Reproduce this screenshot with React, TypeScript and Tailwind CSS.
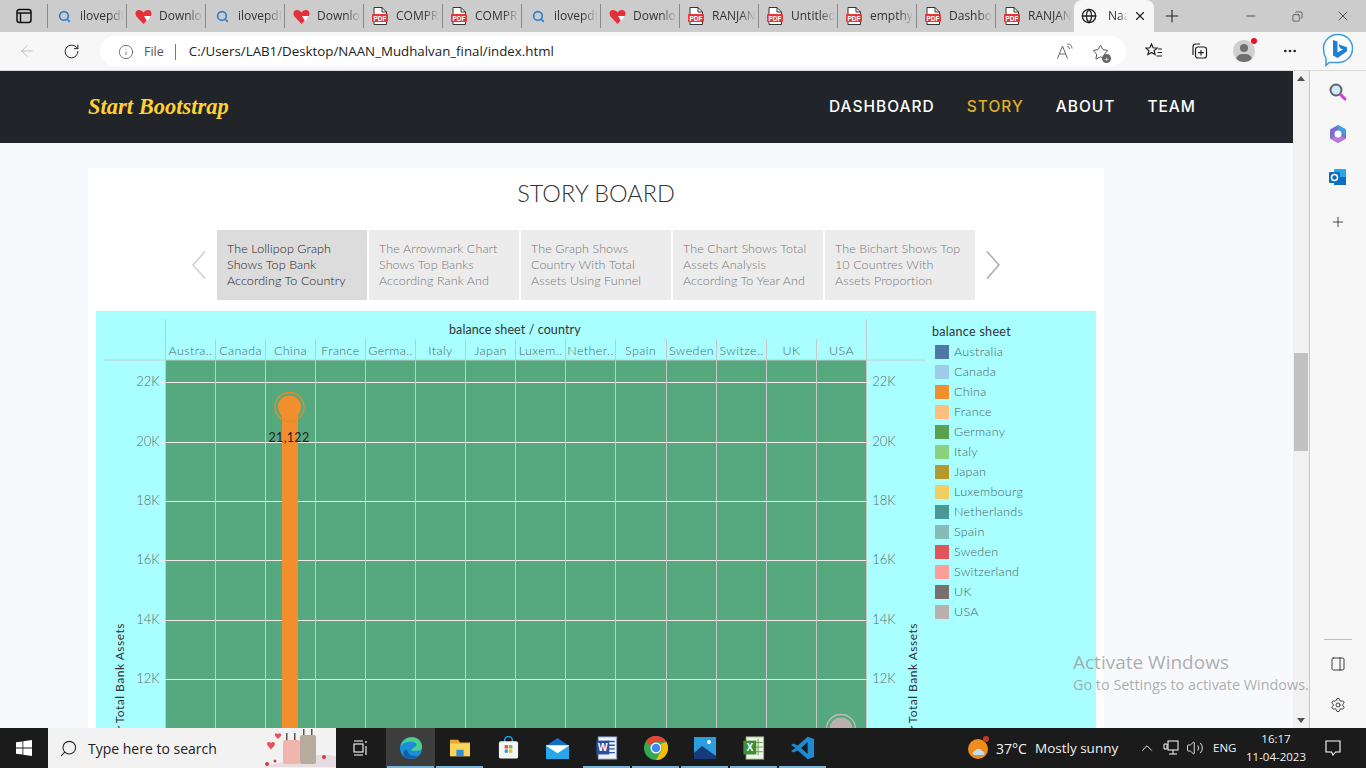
import React from 'react';
import {
  ArrowLeft,
  ChevronUp,
  Copy,
  Globe,
  Info,
  Minus,
  MoreHorizontal,
  PanelRight,
  Plus,
  RotateCw,
  Search,
  Settings,
  Star,
  Volume2,
  X,
} from 'lucide-react';

type TabKind = 'search' | 'heart' | 'pdf';

const tabs: { title: string; kind: TabKind }[] = [
  { title: 'ilovepdf', kind: 'search' },
  { title: 'Downlo', kind: 'heart' },
  { title: 'ilovepdf', kind: 'search' },
  { title: 'Downlo', kind: 'heart' },
  { title: 'COMPR', kind: 'pdf' },
  { title: 'COMPR', kind: 'pdf' },
  { title: 'ilovepdf', kind: 'search' },
  { title: 'Downlo', kind: 'heart' },
  { title: 'RANJAN', kind: 'pdf' },
  { title: 'Untitled', kind: 'pdf' },
  { title: 'empthy', kind: 'pdf' },
  { title: 'Dashbo', kind: 'pdf' },
  { title: 'RANJAN', kind: 'pdf' },
];

const storyPoints = [
  ['The Lollipop Graph', 'Shows Top Bank', 'According To Country'],
  ['The Arrowmark Chart', 'Shows Top Banks', 'According Rank And'],
  ['The Graph Shows', 'Country With Total', 'Assets Using Funnel'],
  ['The Chart Shows Total', 'Assets Analysis', 'According To Year And'],
  ['The Bichart Shows Top', '10 Countres With', 'Assets Proportion'],
];

const countries = ['Austra..', 'Canada', 'China', 'France', 'Germa..', 'Italy', 'Japan', 'Luxem..', 'Nether..', 'Spain', 'Sweden', 'Switze..', 'UK', 'USA'];

const legend = [
  ['Australia', 'bg-[#4e79a7]'],
  ['Canada', 'bg-[#a0cbe8]'],
  ['China', 'bg-[#f28e2b]'],
  ['France', 'bg-[#ffbe7d]'],
  ['Germany', 'bg-[#59a14f]'],
  ['Italy', 'bg-[#8cd17d]'],
  ['Japan', 'bg-[#b6992d]'],
  ['Luxembourg', 'bg-[#f1ce63]'],
  ['Netherlands', 'bg-[#499894]'],
  ['Spain', 'bg-[#86bcb6]'],
  ['Sweden', 'bg-[#e15759]'],
  ['Switzerland', 'bg-[#ff9d9a]'],
  ['UK', 'bg-[#79706e]'],
  ['USA', 'bg-[#bab0ac]'],
];

const ticks = [
  ['22K', 71.5],
  ['20K', 131.5],
  ['18K', 190.5],
  ['16K', 249.5],
  ['14K', 309.5],
  ['12K', 368.5],
] as const;

const PdfIcon = () => (
  <svg width="16" height="18" viewBox="0 0 16 18">
    <path d="M2 .5h8l4.500 4.500v12.500h-12.500z" fill="#fff" stroke="#333" strokeWidth="1" />
    <path d="M10 .5v4.500h4.500" fill="none" stroke="#333" strokeWidth="1" />
    <rect x="0" y="7" width="16" height="8" rx="1" fill="#e9343a" />
    <text x="8" y="13.500" textAnchor="middle" fontSize="6.500" fontWeight="700" fill="#fff" fontFamily="Liberation Sans">PDF</text>
  </svg>
);

const HeartIcon = () => (
  <svg width="17" height="17" viewBox="0 0 17 17">
    <path d="M8.500 16 1.500 8.500C-.5 6 .5 2 4 2c2 0 3.500 1 4.500 2.500C9.500 3 11 2 13 2c3.500 0 4.500 4 2.500 6.500z" fill="#e5303a" />
    <path d="M9 8h7l-4 5z" fill="#fff" />
  </svg>
);

const TabIcon = ({ kind }: { kind: TabKind }) => {
  if (kind === 'pdf') return <PdfIcon />;
  if (kind === 'heart') return <HeartIcon />;
  return <Search size={13} strokeWidth={3} className="text-[#2f7fd1] ml-[1px]" />;
};

const TabStrip = () => (
  <div className="flex h-8 bg-[#cccccc] shrink-0">
    <div className="w-[47px] flex items-center justify-center">
      <svg width="16" height="16" viewBox="0 0 16 16" fill="none" stroke="#111" strokeWidth="1.500">
        <rect x="1" y="1.500" width="14" height="13" rx="2.500" />
        <path d="M1 5h14M4.500 5v9" />
      </svg>
    </div>
    {tabs.map((tab, i) => (
      <div key={i} className="w-[79px] h-full flex items-center">
        <div className="h-[24px] w-full border-l border-[#8a8a8a] flex items-center pl-[7px] overflow-hidden">
          <div className="w-[18px] shrink-0 flex justify-center"><TabIcon kind={tab.kind} /></div>
          <span className="ml-[7px] text-[12px] text-[#333] whitespace-nowrap w-[44px] [mask-image:linear-gradient(to_right,black_65%,transparent)]">
            {tab.title}
          </span>
        </div>
      </div>
    ))}
    <div className="w-[80px] bg-[#f7f7f7] rounded-t-lg flex items-center pl-[7px]">
      <Globe size={16} className="text-[#222]" />
      <span className="ml-[11px] text-[12px] text-[#333] w-[20px] whitespace-nowrap [mask-image:linear-gradient(to_right,black_55%,transparent)]">Naa</span>
      <X size={14} className="ml-[5px] text-[#222]" />
    </div>
    <div className="w-[36px] flex items-center justify-center">
      <Plus size={20} strokeWidth={1.300} className="text-[#222]" />
    </div>
    <div className="flex-1 flex items-center justify-end text-[#222]">
      <div className="w-[46px] flex justify-center"><Minus size={14} strokeWidth={1.200} /></div>
      <div className="w-[46px] flex justify-center"><Copy size={11} strokeWidth={1.300} className="-scale-x-100" /></div>
      <div className="w-[46px] flex justify-center"><X size={16} strokeWidth={1.100} /></div>
    </div>
  </div>
);

const BingIcon = () => (
  <svg width="32" height="34" viewBox="0 0 32 34">
    <path d="M16 1.500c8 0 14.500 6 14.500 14s-6.500 14-14.500 14H7l-3 3v-7C2 22 1.500 19 1.500 15.500c0-8 6.500-14 14.500-14z" fill="#fff" stroke="#3f9be0" strokeWidth="1.500" />
    <path d="M11 7l4.500 1.500v11l5.500-3-3-1.300-1.500-4 8.500 3v4L15.500 25 11 22.500z" fill="#1d7fd8" />
  </svg>
);

const Toolbar = () => (
  <div className="flex items-center h-[39px] bg-[#f7f7f7] shrink-0 border-b border-[#d9d9d9]">
    <div className="w-[54px] flex justify-center"><ArrowLeft size={18} strokeWidth={1.200} className="text-[#b5b5b5]" /></div>
    <div className="w-[34px] flex justify-center"><RotateCw size={17} strokeWidth={1.400} className="text-[#222]" /></div>
    <div className="ml-[12px] w-[1026px] h-[30px] bg-white rounded-full flex items-center pl-[18px] pr-[14px] pt-[2px]">
      <Info size={16} strokeWidth={1.200} className="text-[#555]" />
      <span className="ml-[10px] text-[12.500px] text-[#555]">File</span>
      <span className="ml-[11px] h-[16px] border-l border-[#777]" />
      <span className="ml-[13px] text-[13.300px] text-[#222]">C:/Users/LAB1/Desktop/NAAN_Mudhalvan_final/index.html</span>
      <svg className="ml-auto mr-[18px]" width="18" height="18" viewBox="0 0 18 18" fill="none" stroke="#666" strokeWidth="1">
        <path d="M1.500 15.500 6.500 3l5 12.500M3.300 11h6.400" />
        <path d="M11 3.500c1.500 0 2.500 1 2.500 2.500M11.500 1c3 0 4.500 2 4.500 4.500" />
      </svg>
      <span className="relative mr-[3px]">
        <Star size={17} strokeWidth={1.200} className="text-[#333]" />
        <span className="absolute -right-[2px] -bottom-[2px] w-[9px] h-[9px] rounded-full bg-[#666] text-white text-[8px] leading-[9px] text-center">+</span>
      </span>
    </div>
    <div className="w-[46px] ml-[5px] flex justify-center">
      <svg width="18" height="18" viewBox="0 0 18 18" fill="none" stroke="#222" strokeWidth="1.200">
        <path d="M6.500 2l1.600 3.800 4 .3-3 2.600 1 3.900-3.600-2.100-3.600 2.100 1-3.900-3-2.600 4-.3z" />
        <path d="M13 7h4M12.500 10.500H17M11.500 14H17" />
      </svg>
    </div>
    <div className="w-[44px] flex justify-center">
      <svg width="18" height="18" viewBox="0 0 18 18" fill="none" stroke="#222" strokeWidth="1.200">
        <path d="M3 13V5c0-2 1-3 3-3h4" />
        <rect x="5.500" y="5" width="11" height="11" rx="2.500" fill="#f7f7f7" />
        <path d="M11 8v5.500M8.200 10.700h5.600" />
      </svg>
    </div>
    <div className="w-[46px] flex justify-center relative">
      <div className="w-[22px] h-[22px] rounded-full bg-[#cfcfcf] relative overflow-hidden">
        <div className="absolute left-[7px] top-[4px] w-[8px] h-[8px] rounded-full bg-[#6f6f6f]" />
        <div className="absolute left-[3px] top-[14px] w-[16px] h-[12px] rounded-full bg-[#6f6f6f]" />
      </div>
      <span className="absolute left-[30px] -top-[2px] w-[6px] h-[6px] rounded-full bg-[#e81123]" />
    </div>
    <div className="w-[46px] flex justify-center"><MoreHorizontal size={16} className="text-[#222]" /></div>
    <div className="ml-[9px] -mt-[3px]"><BingIcon /></div>
  </div>
);

const Navbar = () => (
  <nav className="h-[72px] bg-[#212529] flex items-center justify-between pl-[88px] pr-[97px] shrink-0">
    <a className="text-[#fed136] text-[22.500px] italic font-bold [font-family:'Liberation_Serif',serif]">Start Bootstrap</a>
    <div className="flex gap-[32px] text-[15.500px] font-medium text-white tracking-[1px] [font-family:Inter,sans-serif]">
      <span>DASHBOARD</span>
      <span className="text-[#dfae2c]">STORY</span>
      <span>ABOUT</span>
      <span>TEAM</span>
    </div>
  </nav>
);

const StoryArrow = ({ d, color }: { d: string; color: string }) => (
  <svg width="16" height="30" viewBox="0 0 16 30" fill="none" stroke={color} strokeWidth="1.500">
    <path d={d} />
  </svg>
);

const StoryTabs = () => (
  <div className="flex items-center justify-center h-[70px] mt-[21px]">
    <StoryArrow d="M14 1.500 2 15l12 13.500" color="#cfcfcf" />
    <div className="flex gap-[2px] mx-[10px]">
      {storyPoints.map((lines, i) => (
        <div
          key={i}
          className={`w-[150px] h-[70px] pl-[10px] flex flex-col justify-center text-[12.500px] leading-[16px] font-light tracking-[0.1px] whitespace-nowrap ${
            i === 0 ? 'bg-[#dcdcdc] text-[#222]' : 'bg-[#ececec] text-[#777]'
          }`}
        >
          {lines.map((line) => (
            <div key={line}>{line}</div>
          ))}
        </div>
      ))}
    </div>
    <StoryArrow d="M2 1.500 14 15 2 28.500" color="#aaaaaa" />
  </div>
);

// plot runs from x=69 to x=770 inside the panel, each column is about 50px
const COL_W = 50.05;
const PLOT_L = 69.5;
const PLOT_R = PLOT_L + COL_W * 14;
const colX = (i: number) => Math.floor(PLOT_L + COL_W * i) + 0.5;

const Lollipop = ({ cx, cy, color, ring }: { cx: number; cy: number; color: string; ring: string }) => (
  <g>
    <circle cx={cx} cy={cy} r="14.500" fill="none" stroke={ring} strokeWidth="1.300" />
    <circle cx={cx} cy={cy} r="11.500" fill={color} />
  </g>
);

const ChartPlot = () => (
  <svg width="832" height="417" className="shrink-0 [font-family:Lato,sans-serif]">
    <rect x={PLOT_L} y="49" width={COL_W * 14} height="368" fill="#56a97f" />
    {ticks.map(([label, y]) => (
      <g key={label}>
        <line x1={PLOT_L - 5} x2={PLOT_R + 5} y1={y} y2={y} stroke="#f0ecec" strokeWidth="1" />
        <text x={PLOT_L - 6} y={y + 3} textAnchor="end" fontSize="13" fontWeight="300" fill="#5f6d72">{label}</text>
        <text x={PLOT_R + 6} y={y + 3} fontSize="13" fontWeight="300" fill="#5f6d72">{label}</text>
      </g>
    ))}
    {countries.map((name, i) => (
      <text key={name} x={colX(i) + COL_W / 2} y="43.500" textAnchor="middle" fontSize="12.500" fontWeight="300" letterSpacing="0.400" fill="#55666c">{name}</text>
    ))}
    {Array.from({ length: 15 }, (_, i) => (
      <line
        key={i}
        x1={colX(i)}
        x2={colX(i)}
        y1={i === 0 || i === 14 ? 8 : 28}
        y2="417"
        stroke="#cbc8c8"
        strokeWidth="1"
      />
    ))}
    <line x1="8" x2="830" y1="49" y2="49" stroke="#c9cccc" strokeWidth="1" />
    <text x={PLOT_L + COL_W * 7 - 1} y="22.500" textAnchor="middle" fontSize="12.500" letterSpacing="0.100" fill="#333">balance sheet / country</text>

    <rect x="186" y="96" width="16" height="321" fill="#f28e2b" />
    <Lollipop cx={193.500} cy={96} color="#f28e2b" ring="#e08c34" />
    <text x={193} y="130.500" textAnchor="middle" fontSize="12.500" letterSpacing="0.300" fill="#222">21,122</text>

    <Lollipop cx={745} cy={418} color="#bab0ac" ring="#c4bab6" />

    <text transform="translate(28 312) rotate(-90)" textAnchor="end" fontSize="12" letterSpacing="0.500" fill="#33303a">Total Bank Assets</text>
    <text transform="translate(28 419) rotate(-90)" fontSize="12" fill="#33303a">r</text>
    <text transform="translate(821 312) rotate(-90)" textAnchor="end" fontSize="12" letterSpacing="0.500" fill="#33303a">Total Bank Assets</text>
    <text transform="translate(821 419) rotate(-90)" fontSize="12" fill="#33303a">r</text>
  </svg>
);

const Legend = () => (
  <div className="ml-[4px] pt-[13px] [font-family:Lato,sans-serif]">
    <div className="text-[12.500px] leading-[15px] text-[#333] tracking-[0.3px]">balance sheet</div>
    <div className="mt-[6px] ml-[3px] flex flex-col gap-[6px]">
      {legend.map(([name, swatch]) => (
        <div key={name} className="flex items-center h-[14px]">
          <span className={`w-[14px] h-[14px] ${swatch}`} />
          <span className="ml-[5px] text-[12.500px] font-light text-[#4d6066] tracking-[0.3px] whitespace-nowrap">{name}</span>
        </div>
      ))}
    </div>
  </div>
);

const StoryBoard = () => (
  <div className="ml-[88px] w-[1016px] bg-white pt-[9px] [font-family:Lato,sans-serif]">
    <h1 className="text-center text-[23.500px] leading-[32px] text-[#333] font-light">STORY BOARD</h1>
    <StoryTabs />
    <div className="mx-[8px] mt-[11px] h-[417px] bg-[#a9ffff] flex overflow-hidden">
      <ChartPlot />
      <Legend />
    </div>
  </div>
);

const Scrollbar = () => (
  <div className="w-[16px] bg-[#f1f1f1] flex flex-col items-center shrink-0 relative">
    <span className="mt-[5px] border-x-[4px] border-x-transparent border-b-[5px] border-b-[#505050]" />
    <div className="absolute left-[1px] top-[282px] w-[14px] h-[98px] bg-[#c1c1c1]" />
    <span className="mt-auto mb-[5px] border-x-[4px] border-x-transparent border-t-[5px] border-t-[#505050]" />
  </div>
);

const SideRail = () => (
  <div className="flex-1 bg-[#f7f7f7] border-l border-[#c8c8c8] flex flex-col items-center pt-[11px]">
    <svg width="20" height="20" viewBox="0 0 20 20" fill="none">
      <circle cx="8" cy="8" r="5.500" fill="#d5e9f5" stroke="#5c6670" strokeWidth="2" />
      <path d="M12.500 12.500 17 17" stroke="#c93fd8" strokeWidth="3" strokeLinecap="round" />
    </svg>
    <svg className="mt-[22px]" width="20" height="20" viewBox="0 0 20 20">
      <path d="M10 1l8 4.500v9L10 19l-8-4.500v-9z" fill="#7a6fd8" />
      <path d="M10 1l8 4.500v5l-8-4.500z" fill="#39a5e0" />
      <path d="M2 14.500l8-4 8 4L10 19z" fill="#b57ad6" />
      <circle cx="10" cy="10" r="3.500" fill="#fff" />
    </svg>
    <svg className="mt-[24px]" width="18" height="18" viewBox="0 0 18 18">
      <rect x="5" y="1" width="12" height="16" rx="1" fill="#28a8ea" />
      <path d="M5 9h12v8H5z" fill="#0a6fc2" />
      <rect x="0" y="4" width="11" height="11" rx="1" fill="#0f6cbd" />
      <circle cx="5.500" cy="9.500" r="3" fill="none" stroke="#fff" strokeWidth="1.500" />
    </svg>
    <Plus size={16} strokeWidth={1.200} className="mt-[28px] text-[#222]" />
    <div className="mt-auto w-[28px] border-t border-[#bdbdbd]" />
    <PanelRight size={16} strokeWidth={1.300} className="mt-[16px] text-[#222]" />
    <Settings size={16} strokeWidth={1.300} className="mt-[25px] mb-[15px] text-[#222]" />
  </div>
);

const Suitcases = () => (
  <svg width="74" height="39" viewBox="0 0 74 39" className="absolute right-0 top-0">
    <path d="M0 39 L24 33 Q50 24 74 28 V39z" fill="#e6dcdf" />
    <path d="M9 15c-2.500-2.500-5.500 0-3 3l3 3.500 3-3.500c2.500-3 -.5-5.500-3-3z" fill="#e8525c" />
    <path d="M16 6c-2-2-4.500 0-2.500 2.500L16 11l2.500-2.500C20.500 6 18 4 16 6z" fill="#e8525c" />
    <rect x="24" y="5" width="1.500" height="9" fill="#555" />
    <rect x="32" y="5" width="1.500" height="9" fill="#555" />
    <rect x="21" y="12" width="17" height="24" rx="2" fill="#f0b5ad" />
    <rect x="41" y="1" width="1.500" height="8" fill="#555" />
    <rect x="49" y="1" width="1.500" height="8" fill="#555" />
    <rect x="38" y="7" width="16" height="29" rx="2" fill="#b7ab9e" />
    <circle cx="5" cy="36" r="2" fill="#d93a3a" />
    <circle cx="13" cy="33" r="1.500" fill="#d93a3a" />
    <circle cx="62" cy="29" r="2" fill="#d93a3a" />
  </svg>
);

const appIcons: { id: string; marker: boolean; icon: React.ReactNode }[] = [
  {
    id: 'edge',
    marker: true,
    icon: (
      <svg width="24" height="24" viewBox="0 0 26 26">
        <circle cx="13" cy="13" r="12" fill="#1a8fd6" />
        <path d="M2 11C4 3 12 0 18 2c4 1.500 7 5 7 10 0 3-3 4-6 4h-5c-1-4 6-3 5-7C18 5 7 4 2 11z" fill="#4fd08a" />
        <path d="M9 15c0 5 5 8 11 6-3 4-10 5-14 1-2-3-1-8 3-7z" fill="#0f5fa8" />
      </svg>
    ),
  },
  {
    id: 'explorer',
    marker: true,
    icon: (
      <svg width="22" height="20" viewBox="0 0 24 22">
        <path d="M1 2h9l2 3h11v15H1z" fill="#e8a92a" />
        <rect x="1" y="6" width="22" height="14" fill="#fbd45c" />
        <rect x="8" y="13" width="8" height="7" fill="#2f8fd6" />
      </svg>
    ),
  },
  {
    id: 'store',
    marker: false,
    icon: (
      <svg width="23" height="24" viewBox="0 0 24 24">
        <path d="M8 6V4a4 4 0 0 1 8 0v2" fill="none" stroke="#22a5e0" strokeWidth="1.500" />
        <rect x="2" y="5" width="20" height="18" rx="2" fill="#f5f5f5" />
        <rect x="8" y="9" width="3.500" height="3.500" fill="#e8523a" />
        <rect x="12.500" y="9" width="3.500" height="3.500" fill="#7fb83a" />
        <rect x="8" y="13.500" width="3.500" height="3.500" fill="#2f9fe0" />
        <rect x="12.500" y="13.500" width="3.500" height="3.500" fill="#f5b52a" />
      </svg>
    ),
  },
  {
    id: 'mail',
    marker: false,
    icon: (
      <svg width="25" height="23" viewBox="0 0 26 24">
        <path d="M1 9l12-8 12 8v14H1z" fill="#0f6fc2" />
        <path d="M1 9h24v14H1z" fill="#28a8ea" />
        <path d="M1 9l12 8 12-8v-.5H1z" fill="#fff" />
      </svg>
    ),
  },
  {
    id: 'word',
    marker: true,
    icon: (
      <svg width="23" height="24" viewBox="0 0 24 26">
        <rect x="3" y="1" width="20" height="24" fill="#eef2fa" stroke="#8aa0c8" />
        <path d="M13 6h8M13 10h8M13 14h8M13 18h8" stroke="#2a5ab0" strokeWidth="1.500" />
        <path d="M1 5h14v15H1z" fill="#2a4fa0" />
        <text x="8" y="16" textAnchor="middle" fontSize="11" fontWeight="700" fill="#fff" fontFamily="Liberation Sans">W</text>
      </svg>
    ),
  },
  {
    id: 'chrome',
    marker: true,
    icon: (
      <svg width="24" height="24" viewBox="0 0 24 24">
        <circle cx="12" cy="12" r="12" fill="#34a853" />
        <path d="M12 0a12 12 0 0 1 10.400 6H12a6 6 0 0 0-5.600 3.800L2.400 4.500A12 12 0 0 1 12 0z" fill="#ea4335" />
        <path d="M22.400 6A12 12 0 0 1 12 24l5-8.500A6 6 0 0 0 16.500 8z" fill="#fbbc05" />
        <circle cx="12" cy="12" r="5.500" fill="#fff" />
        <circle cx="12" cy="12" r="4.300" fill="#4285f4" />
      </svg>
    ),
  },
  {
    id: 'photos',
    marker: true,
    icon: (
      <svg width="22" height="22" viewBox="0 0 22 22">
        <rect width="22" height="22" fill="#2a9fe0" />
        <path d="M0 16l8-7 14 10v3H0z" fill="#173a78" />
        <circle cx="15" cy="5" r="2" fill="#fff" />
      </svg>
    ),
  },
  {
    id: 'excel',
    marker: true,
    icon: (
      <svg width="23" height="24" viewBox="0 0 24 26">
        <rect x="4" y="1" width="19" height="24" fill="#eef5e8" stroke="#9db98a" />
        <path d="M12 7h10M12 12h10M12 17h10M17 3v18" stroke="#5fa04a" />
        <path d="M1 5h14v15H1z" fill="#3e8e3a" />
        <text x="8" y="16" textAnchor="middle" fontSize="11" fontWeight="700" fill="#fff" fontFamily="Liberation Sans">X</text>
      </svg>
    ),
  },
  {
    id: 'vscode',
    marker: true,
    icon: (
      <svg width="24" height="24" viewBox="0 0 26 32" preserveAspectRatio="none">
        <path d="M18 1l7 3v24l-7 3L7 19l-4 3-3-2 5-4-5-4 3-2 4 3z" fill="#1f8ad2" />
        <path d="M18 8v16l-7-8z" fill="#1b1b1b" />
      </svg>
    ),
  },
];

const Taskbar = () => (
  <div className="h-[40px] bg-[#1b1b1b] flex items-stretch shrink-0 text-white [font-family:'Open_Sans',sans-serif]">
    <div className="w-[48px] flex items-center justify-center">
      <svg width="16" height="16" viewBox="0 0 16 16" fill="#fff">
        <path d="M0 2.300 6.500 1.400v6.200H0zM7.300 1.300 16 0v7.600H7.300zM0 8.400h6.500v6.200L0 13.700zM7.300 8.400H16V16l-8.700-1.300z" />
      </svg>
    </div>
    <div className="relative w-[288px] bg-[#f2f2f2] flex items-center pl-[11px] overflow-hidden">
      <Search size={19} strokeWidth={1.300} className="text-[#222] -scale-x-100" />
      <span className="ml-[10px] text-[14px] text-[#222]">Type here to search</span>
      <Suitcases />
    </div>
    <div className="w-[50px] flex items-center justify-center">
      <svg width="16" height="16" viewBox="0 0 16 16" fill="none" stroke="#fff" strokeWidth="1.100">
        <path d="M1 1h9M1 15h9" />
        <rect x="1" y="4" width="9" height="8" />
        <path d="M13 1v2M13 6v9" />
      </svg>
    </div>
    {appIcons.map((app, i) => (
      <div key={app.id} className={`relative w-[49px] flex items-center justify-center ${i === 0 ? 'bg-[#3d3d3d]' : ''}`}>
        {app.icon}
        {app.marker && <span className="absolute left-[1px] right-[1px] bottom-0 h-[2px] bg-[#7ab4d8]" />}
      </div>
    ))}
    <div className="ml-auto flex items-center text-[#f2f2f2]">
      <svg width="24" height="26" viewBox="0 0 24 26">
        <circle cx="11" cy="14" r="10" fill="#f08c1e" />
        <circle cx="19" cy="4" r="3" fill="#c0392b" />
        <path d="M8 20c-3 0-3-4 0-4 1-3 6-3 7 0 3 0 4 4 0 4z" fill="#bcdcf0" />
      </svg>
      <span className="ml-[5px] text-[14px] w-[30px] whitespace-nowrap">37°C</span>
      <span className="ml-[9px] text-[13.500px] w-[82px] whitespace-nowrap">Mostly sunny</span>
      <ChevronUp size={18} strokeWidth={1.300} className="ml-[21px]" />
      <svg className="ml-[7px]" width="16" height="16" viewBox="0 0 16 16" fill="none" stroke="#fff" strokeWidth="1">
        <rect x="5" y="1" width="10" height="9" />
        <path d="M1 4h3v5H1zM10 10v4M6 14h8" />
      </svg>
      <Volume2 size={18} strokeWidth={1.200} className="ml-[7px]" />
      <span className="ml-[9px] text-[11.500px] w-[24px]">ENG</span>
      <div className="ml-[7px] w-[64px] text-center text-[11.500px] leading-[18px]">
        <div>16:17</div>
        <div>11-04-2023</div>
      </div>
      <div className="w-[58px] pr-[8px] flex justify-center">
        <svg width="16" height="16" viewBox="0 0 16 16" fill="none" stroke="#fff" strokeWidth="1.100">
          <path d="M1 1h14v11h-4.500L8 15l-1.500-3H1z" />
        </svg>
      </div>
    </div>
  </div>
);

export default function App() {
  return (
    <div className="relative w-[1366px] h-[768px] overflow-hidden flex flex-col [font-family:'Open_Sans',sans-serif] bg-[#f7f7f7]">
      <TabStrip />
      <Toolbar />
      <div className="flex flex-1 min-h-0">
        <main className="w-[1293px] shrink-0 bg-[#f8f9fc] overflow-hidden">
          <Navbar />
          <div className="pt-[25px]">
            <StoryBoard />
          </div>
        </main>
        <Scrollbar />
        <SideRail />
      </div>
      <Taskbar />
      <div className="absolute left-[1073px] top-[650px] text-[#9a9a9a]/80 whitespace-nowrap pointer-events-none">
        <div className="text-[19px] leading-[25px]">Activate Windows</div>
        <div className="text-[14.400px] leading-[20px]">Go to Settings to activate Windows.</div>
      </div>
    </div>
  );
}
